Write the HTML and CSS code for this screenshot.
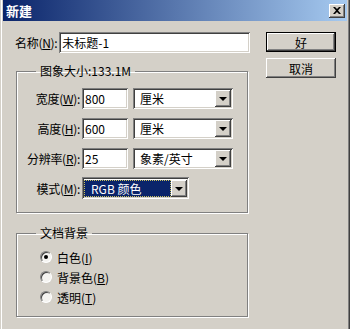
FILE: index.html
```html
<!DOCTYPE html>
<html lang="zh-CN">
<head>
    <meta charset="UTF-8">
    <title>新建</title>
    <link rel="stylesheet" href="styles.css">
</head>
<body>
    <div class="window">
        <div class="titlebar">
            <span class="title">新建</span>
            <span class="close-btn">
                <svg width="8" height="7" viewBox="0 0 8 7"><path d="M0 0h2l2 2 2-2h2L5 3.5 8 7H6L4 5 2 7H0l3-3.5z" fill="#000"/></svg>
            </span>
        </div>

        <div class="dialog-body">
            <div class="main-col">
                <div class="name-row">
                    <label class="name-label">名称(<u>N</u>):</label>
                    <div class="field name-field">未标题-1</div>
                </div>

                <fieldset class="group size-group">
                    <legend>图象大小:133.1M</legend>
                    <div class="form-row">
                        <label class="row-label">宽度(<u>W</u>):</label>
                        <div class="field num-field">800</div>
                        <div class="field combo">
                            <span class="combo-text">厘米</span>
                            <span class="combo-arrow"><i></i></span>
                        </div>
                    </div>
                    <div class="form-row">
                        <label class="row-label">高度(<u>H</u>):</label>
                        <div class="field num-field">600</div>
                        <div class="field combo">
                            <span class="combo-text">厘米</span>
                            <span class="combo-arrow"><i></i></span>
                        </div>
                    </div>
                    <div class="form-row">
                        <label class="row-label">分辨率(<u>R</u>):</label>
                        <div class="field num-field">25</div>
                        <div class="field combo">
                            <span class="combo-text">象素/英寸</span>
                            <span class="combo-arrow"><i></i></span>
                        </div>
                    </div>
                    <div class="form-row mode-row">
                        <label class="row-label">模式(<u>M</u>):</label>
                        <div class="field combo mode-combo">
                            <span class="combo-text selected">RGB 颜色</span>
                            <span class="combo-arrow"><i></i></span>
                        </div>
                    </div>
                </fieldset>

                <fieldset class="group bg-group">
                    <legend>文档背景</legend>
                    <div class="radio-row">
                        <span class="radio checked"></span>
                        <span>白色(<u>I</u>)</span>
                    </div>
                    <div class="radio-row">
                        <span class="radio"></span>
                        <span>背景色(<u>B</u>)</span>
                    </div>
                    <div class="radio-row">
                        <span class="radio"></span>
                        <span>透明(<u>T</u>)</span>
                    </div>
                </fieldset>
            </div>

            <div class="button-col">
                <button class="btn default">好</button>
                <button class="btn">取消</button>
            </div>
        </div>
    </div>
</body>
</html>
```

FILE: styles.css
```css
* {
    margin: 0;
    padding: 0;
    box-sizing: border-box;
    font-family: "Noto Sans CJK SC", "DejaVu Sans", sans-serif;
}

:root {
    --face: #d4d0c8;
    --shadow: #808080;
    --dark: #404040;
    --light: #ffffff;
}

body {
    width: 350px;
    height: 329px;
    overflow: hidden;
    background-color: var(--face);
    font-size: 12px;
    color: #000;
}

u {
    text-decoration: underline;
    text-underline-offset: 1px;
}

.window {
    width: 350px;
    height: 329px;
    padding: 0 3px;
    background-color: var(--face);
    box-shadow: inset 1px 0 var(--face), inset 2px 0 var(--light), inset -1px 0 var(--dark), inset -2px 0 var(--shadow);
}

.titlebar {
    height: 21px;
    padding: 0 2px 0 3px;
    display: flex;
    align-items: center;
    justify-content: space-between;
    background: linear-gradient(to right, #0a246a, #a6caf0);
}

.title {
    color: #fff;
    font-size: 13px;
    font-weight: bold;
    line-height: 21px;
}

.close-btn {
    width: 16px;
    height: 14px;
    display: flex;
    align-items: center;
    justify-content: center;
    background-color: var(--face);
    box-shadow: inset -1px -1px var(--dark), inset 1px 1px var(--light), inset -2px -2px var(--shadow);
}

.dialog-body {
    display: flex;
    padding: 11px 0 0 12px;
    gap: 16px;
}

.main-col {
    width: 235px;
    display: flex;
    flex-direction: column;
}

.field {
    background-color: #fff;
    box-shadow: inset 1px 1px var(--shadow), inset -1px -1px var(--light), inset 2px 2px var(--dark), inset -2px -2px var(--face);
    height: 21px;
    line-height: 21px;
    padding: 0 3px;
    white-space: nowrap;
}

.name-row {
    display: flex;
    align-items: center;
    gap: 2px;
}

.name-label {
    white-space: nowrap;
    letter-spacing: -0.3px;
}

.name-field {
    flex: 1;
}

.group {
    border: 1px solid var(--shadow);
    box-shadow: inset 1px 1px var(--light), 1px 1px var(--light);
    margin-left: 1px;
    width: 232px;
}

.group legend {
    padding: 0 4px;
    line-height: 16px;
    height: 16px;
}

.size-group {
    margin-top: 10px;
    padding: 9px 0 13px 6px;
    display: flex;
    flex-direction: column;
    gap: 9px;
}

.size-group legend {
    margin-left: 13px;
}

.form-row {
    display: flex;
    align-items: center;
    gap: 2px;
}

.mode-row {
    margin-top: -1px;
}

.row-label {
    width: 57px;
    text-align: right;
    white-space: nowrap;
    letter-spacing: -0.3px;
}

.num-field {
    width: 46px;
    margin-right: 3px;
}

.combo {
    width: 100px;
    display: flex;
    align-items: center;
    padding: 2px;
}

.combo-text {
    flex: 1;
    height: 17px;
    line-height: 17px;
    padding-left: 5px;
}

.combo-text.selected {
    background-color: #0a246a;
    color: #fff;
    outline: 1px dotted #c8c060;
    outline-offset: -1px;
    padding-left: 7px;
}

.mode-combo {
    width: 107px;
    height: 22px;
}

.combo-arrow {
    width: 16px;
    height: 17px;
    display: flex;
    align-items: center;
    justify-content: center;
    background-color: var(--face);
    box-shadow: inset -1px -1px var(--dark), inset 1px 1px var(--light), inset -2px -2px var(--shadow);
}

.combo-arrow i {
    width: 0;
    height: 0;
    border-left: 4px solid transparent;
    border-right: 4px solid transparent;
    border-top: 4px solid #000;
    margin-top: 1px;
}

.bg-group {
    margin-top: 12px;
    padding: 6px 0 9px 23px;
}

.bg-group legend {
    margin-left: -4px;
}

.radio-row {
    height: 20px;
    display: flex;
    align-items: center;
    gap: 5px;
}

.radio {
    width: 12px;
    height: 12px;
    border-radius: 50%;
    border: 1px solid;
    border-color: var(--shadow) var(--light) var(--light) var(--shadow);
    background-color: #f4f3f0;
    box-shadow: inset 1px 1px var(--dark);
    display: flex;
    align-items: center;
    justify-content: center;
}

.radio.checked::after {
    content: "";
    width: 4px;
    height: 4px;
    border-radius: 50%;
    background-color: #000;
}

.button-col {
    display: flex;
    flex-direction: column;
    gap: 6px;
}

.btn {
    width: 70px;
    height: 20px;
    font-size: 12px;
    background-color: var(--face);
    border: none;
    box-shadow: inset -1px -1px var(--dark), inset 1px 1px var(--light), inset -2px -2px var(--shadow), inset 2px 2px var(--face);
}

.btn.default {
    border: 1px solid #000;
}
```
